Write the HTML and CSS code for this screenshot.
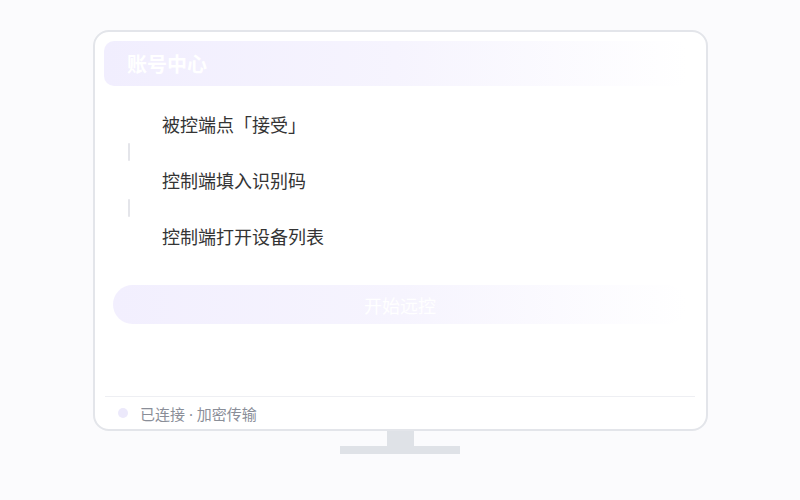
FILE: index.html
```html
<!DOCTYPE html>
<html lang="zh-CN">
<head>
<meta charset="utf-8">
<link rel="stylesheet" href="styles.css">
</head>
<body>
<div class="stage">
  <div class="monitor">
    <div class="header"><span class="title">账号中心</span></div>
    <div class="steps">
      <div class="step"><span class="mark"></span><span class="label">被控端点「接受」</span></div>
      <div class="conn"><span class="line"></span></div>
      <div class="step"><span class="mark"></span><span class="label">控制端填入识别码</span></div>
      <div class="conn"><span class="line"></span></div>
      <div class="step"><span class="mark"></span><span class="label">控制端打开设备列表</span></div>
    </div>
    <div class="btn">开始远控</div>
    <div class="spacer"></div>
    <div class="footer"><span class="dot"></span><span class="status">已连接 · 加密传输</span></div>
  </div>
  <div class="neck"></div>
  <div class="base"></div>
</div>
</body>
</html>
```
FILE: styles.css
```css
html, body { margin: 0; padding: 0; }
body {
  background: #fbfbfd;
  width: 800px;
  height: 500px;
  font-family: "Noto Sans CJK SC", "Noto Sans", sans-serif;
}
.stage {
  padding-top: 30px;
  display: flex;
  flex-direction: column;
  align-items: center;
}
.monitor {
  box-sizing: border-box;
  width: 615px;
  height: 401px;
  margin-left: 1px;
  border: 2px solid #e3e5ea;
  border-radius: 16px;
  background: #ffffff;
  padding: 9px 9px 0 9px;
  display: flex;
  flex-direction: column;
}
.header {
  height: 45px;
  border-radius: 10px;
  background: linear-gradient(90deg, #f1eefe 0%, #f6f4fe 50%, #ffffff 100%);
  display: flex;
  align-items: center;
  padding-left: 23px;
  margin-right: 10px;
}
.title {
  color: #ffffff;
  font-size: 20px;
  font-weight: 700;
}
.steps {
  margin-top: 26px;
  padding-left: 9px;
  display: flex;
  flex-direction: column;
}
.step {
  height: 24px;
  display: flex;
  align-items: center;
}
.mark {
  width: 32px;
  flex: none;
}
.label {
  margin-left: 17px;
  font-size: 18px;
  color: #343434;
  line-height: 24px;
}
.conn {
  height: 32px;
  display: flex;
  align-items: center;
}
.line {
  width: 2px;
  height: 18px;
  margin-left: 15px;
  background: #e4e5ea;
  border-radius: 1px;
}
.btn {
  margin: 37px 10px 0 9px;
  height: 39px;
  border-radius: 20px;
  background: linear-gradient(90deg, #f2effe 0%, #f6f4fe 50%, #ffffff 100%);
  color: #ffffff;
  font-size: 18px;
  display: flex;
  align-items: center;
  justify-content: center;
}
.spacer { flex: 1; }
.footer {
  margin: 0 2px 0 1px;
  border-top: 1px solid #eeeff3;
  height: 32px;
  display: flex;
  align-items: center;
  padding-left: 13px;
}
.dot {
  width: 10px;
  height: 10px;
  border-radius: 50%;
  background: #ece9fb;
}
.status {
  margin-left: 12px;
  font-size: 15px;
  color: #8a8e98;
  font-family: "Noto Sans", "Noto Sans CJK SC", sans-serif;
}
.neck {
  width: 27px;
  height: 15px;
  background: #dfe2e7;
}
.base {
  width: 120px;
  height: 8px;
  background: #dfe2e7;
}
```
